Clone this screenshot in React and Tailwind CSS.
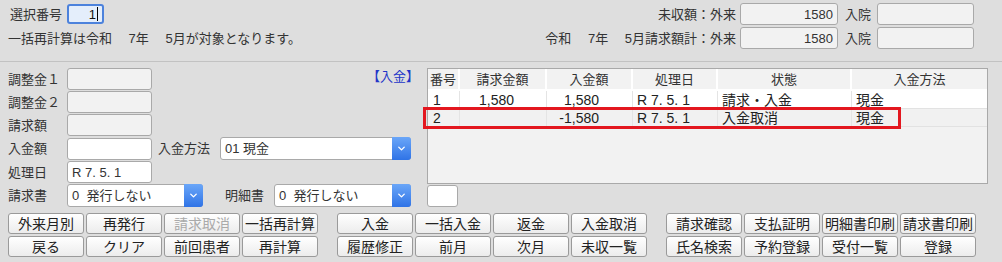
import { ChevronDown } from 'lucide-react';

const cols = [
    { key: 'no', title: '番号', w: 'w-[32px]', align: 'text-left pl-[5px]' },
    { key: 'bill', title: '請求金額', w: 'w-[87px]', align: 'text-right pr-[32px]' },
    { key: 'paid', title: '入金額', w: 'w-[86px]', align: 'text-right pr-[33px]' },
    { key: 'date', title: '処理日', w: 'w-[85px]', align: 'text-left pl-[4px]' },
    { key: 'state', title: '状態', w: 'w-[134px]', align: 'text-left pl-[4px]' },
    { key: 'method', title: '入金方法', w: 'flex-1', align: 'text-left pl-[4px]' },
];

const rows = [
    { no: '1', bill: '1,580', paid: '1,580', date: 'R 7. 5. 1', state: '請求・入金', method: '現金' },
    { no: '2', bill: '', paid: '-1,580', date: 'R 7. 5. 1', state: '入金取消', method: '現金' },
];

const buttonGroups = [
    [
        ['外来月別', '再発行', '請求取消', '一括再計算'],
        ['戻る', 'クリア', '前回患者', '再計算'],
    ],
    [
        ['入金', '一括入金', '返金', '入金取消'],
        ['履歴修正', '前月', '次月', '未収一覧'],
    ],
    [
        ['請求確認', '支払証明', '明細書印刷', '請求書印刷'],
        ['氏名検索', '予約登録', '受付一覧', '登録'],
    ],
];

function Field({ value = '', readOnly, className = '', right }) {
    return (
        <div
            className={`h-[22px] border border-[#a9a9a9] rounded-[3px] flex items-center px-[4px] ${readOnly ? 'bg-[#f2f2f2]' : 'bg-white'} ${right ? 'justify-end' : ''} ${className}`}
        >
            {value}
        </div>
    );
}

function Select({ value, className = '' }) {
    return (
        <div className={`h-[23px] border border-[#a9a9a9] rounded-[3px] bg-white flex ${className}`}>
            <div className="flex-1 flex items-center pl-[4px]">{value}</div>
            <div className="w-[19px] -my-px -mr-px rounded-r-[3px] bg-gradient-to-b from-[#6aa6f8] to-[#2f73e6] flex items-center justify-center">
                <ChevronDown size={11} strokeWidth={3} color="#ffffff" />
            </div>
        </div>
    );
}

function Btn({ label }) {
    const disabled = label === '請求取消';
    return (
        <div
            className={`w-[76px] h-[21px] border border-[#9a9a9a] rounded-[3px] bg-gradient-to-b from-white to-[#ececec] flex items-center justify-center text-[14px] ${disabled ? 'text-[#aaaaaa]' : 'text-[#222]'}`}
        >
            {label}
        </div>
    );
}

export default function App() {
    return (
        <div className="relative w-[1002px] h-[262px] bg-[#dedede] text-[13px] text-[#333] font-['Liberation_Sans','Noto_Sans_CJK_JP',sans-serif] leading-none overflow-hidden">
            {/* top header */}
            <div className="h-[62px] border-b border-[#c2c2c2] flex justify-between">
                <div className="pl-[8px] pt-[4px]">
                    <div className="flex items-center h-[20px] pl-[2px]">
                        <span className="w-[57px]">選択番号</span>
                        <div className="w-[37px] h-[20px] border-2 border-[#4c82dc] rounded-[3px] bg-[#e4eefb] flex items-center justify-end pr-[4px] text-[#111]">
                            1<span className="w-px h-[14px] bg-black ml-px" />
                        </div>
                    </div>
                    <div className="mt-[7px] leading-[16px]">一括再計算は令和　 7年　 5月が対象となります。</div>
                </div>
                <div className="pt-[3px] pr-[28px] flex flex-col gap-[2px]">
                    <div className="flex items-center justify-end">
                        <span className="mr-[4px]">未収額：外来</span>
                        <Field value="1580" readOnly right className="w-[98px]" />
                        <span className="ml-[7px] mr-[6px]">入院</span>
                        <Field readOnly className="w-[97px]" />
                    </div>
                    <div className="flex items-center justify-end">
                        <span className="mr-[4px]">令和　 7年　 5月請求額計：外来</span>
                        <Field value="1580" readOnly right className="w-[98px]" />
                        <span className="ml-[7px] mr-[6px]">入院</span>
                        <Field readOnly className="w-[97px]" />
                    </div>
                </div>
            </div>

            {/* main form */}
            <div className="flex pt-[6px]">
                <div className="w-[427px] pl-[8px] flex flex-col gap-px">
                    <div className="flex items-center">
                        <span className="w-[59px]">調整金１</span>
                        <Field readOnly className="w-[85px]" />
                        <span className="ml-auto mr-[8px] text-[#2235c8] self-start mt-[2px]">【入金】</span>
                    </div>
                    <div className="flex items-center">
                        <span className="w-[59px]">調整金２</span>
                        <Field readOnly className="w-[85px]" />
                    </div>
                    <div className="flex items-center">
                        <span className="w-[59px]">請求額</span>
                        <Field readOnly className="w-[85px]" />
                    </div>
                    <div className="flex items-center">
                        <span className="w-[59px]">入金額</span>
                        <Field className="w-[85px]" />
                        <span className="w-[62px] ml-[6px]">入金方法</span>
                        <Select value="01 現金" className="w-[191px]" />
                    </div>
                    <div className="flex items-center">
                        <span className="w-[59px]">処理日</span>
                        <Field value="R 7. 5. 1" className="w-[85px]" />
                    </div>
                    <div className="flex items-center">
                        <span className="w-[59px]">請求書</span>
                        <Select value="0  発行しない" className="w-[136px] whitespace-pre" />
                        <span className="ml-[22px] w-[49px]">明細書</span>
                        <Select value="0  発行しない" className="w-[137px] whitespace-pre" />
                    </div>
                </div>

                <div className="flex flex-col">
                    <div className="w-[561px] h-[116px] border border-[#a9a9a9] bg-[#f2f2f2]">
                        <div className="flex h-[22px] border-b-2 border-white">
                            {cols.map(c => (
                                <div key={c.key} className={`${c.w} flex items-center justify-center border-r-2 border-white last:border-r-0`}>
                                    {c.title}
                                </div>
                            ))}
                        </div>
                        {rows.map((r, i) => (
                            <div key={r.no} className={`flex h-[18px] border-b border-[#e2e2e2] ${i === 0 ? 'bg-white' : 'bg-[#f1f1f1]'} text-[14px] text-[#222]`}>
                                {cols.map(c => (
                                    <div key={c.key} className={`${c.w} flex items-center border-r border-[#e4e4e4] last:border-r-0 ${c.align} ${c.align.includes('right') ? 'justify-end' : ''}`}>
                                        {r[c.key]}
                                    </div>
                                ))}
                            </div>
                        ))}
                    </div>
                    <Field className="w-[31px] mt-px" />
                </div>
            </div>

            {/* buttons */}
            <div className="flex pl-[8px] pt-[6px] gap-[19px]">
                {buttonGroups.map((group, gi) => (
                    <div key={gi} className="flex flex-col gap-[2px]">
                        {group.map((row, ri) => (
                            <div key={ri} className="flex gap-[2px]">
                                {row.map(label => (
                                    <Btn key={label} label={label} />
                                ))}
                            </div>
                        ))}
                    </div>
                ))}
            </div>

            {/* highlight annotation */}
            <div className="absolute left-[423px] top-[107px] w-[478px] h-[22px] border-[3px] border-[#e3171f]" />
        </div>
    );
}
